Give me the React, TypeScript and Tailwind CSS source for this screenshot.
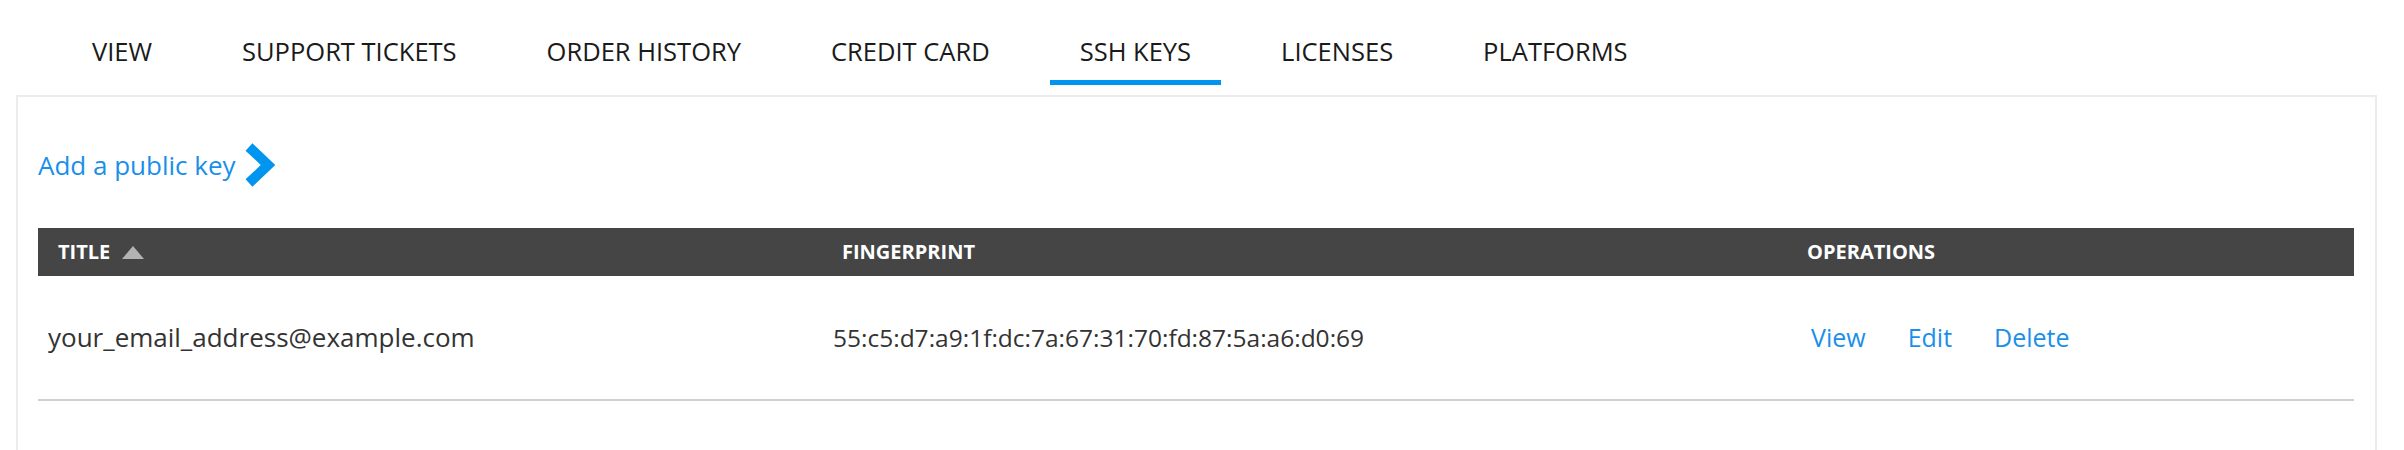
import React from "react";

const tabs = ["View", "Support tickets", "Order history", "Credit card", "SSH keys", "Licenses", "Platforms"];

function Chevron() {
  return (
    <svg width="31" height="44" viewBox="0 0 31 44" className="shrink-0">
      <polyline points="5,4 24,22 5,40" fill="none" stroke="#0096f0" strokeWidth="10" strokeLinejoin="miter" strokeLinecap="butt" />
    </svg>
  );
}

export default function App() {
  return (
    <div className="w-[2404px] h-[450px] overflow-hidden bg-white font-['Open_Sans',sans-serif]">
      <nav className="flex pl-[62px] pt-[34px] mb-[10px]">
        {tabs.map((t) => (
          <div
            key={t}
            className={
              t === "SSH keys"
                ? "px-[30px] mr-[30px] pb-[12px] border-b-[5px] border-[#0096f0] text-[25.5px] leading-[34px] text-[#1a1a1a] uppercase"
                : "px-[30px] mr-[30px] pb-[12px] border-b-[5px] border-transparent text-[25.5px] leading-[34px] text-[#1a1a1a] uppercase"
            }
          >
            {t}
          </div>
        ))}
      </nav>
      <div className="ml-[16px] w-[2361px] h-[400px] border-2 border-[#ececec] px-[20px] pt-[46px]">
        <div className="flex items-center h-[44px]">
          <a className="text-[26px] leading-[34px] text-[#1a8fea]">Add a public key</a>
          <span className="ml-[8px] flex"><Chevron /></span>
        </div>
        <table className="mt-[41px] w-[2316px] table-fixed border-collapse">
          <colgroup>
            <col className="w-[784px]" />
            <col className="w-[965px]" />
            <col />
          </colgroup>
          <thead>
            <tr className="h-[48px] bg-[#454545] text-white text-[20px] font-bold uppercase text-left">
              <th className="pl-[20px] font-bold">
                <span className="inline-flex items-center">
                  Title
                  <svg width="22" height="13" viewBox="0 0 22 13" className="ml-[12px]">
                    <polygon points="11,0 22,13 0,13" fill="#b3b3b3" />
                  </svg>
                </span>
              </th>
              <th className="pl-[20px] font-bold">Fingerprint</th>
              <th className="pl-[20px] font-bold">Operations</th>
            </tr>
          </thead>
          <tbody>
            <tr className="border-b-2 border-[#d0d0d0] leading-[35px] text-[#333]">
              <td className="pl-[10px] py-[44px] text-[26px]">your_email_address@example.com</td>
              <td className="pl-[11px] py-[44px] text-[24.5px]">55:c5:d7:a9:1f:dc:7a:67:31:70:fd:87:5a:a6:d0:69</td>
              <td className="pl-[24px] py-[44px] text-[25px]">
                <div className="flex gap-[42px] text-[#1a8fea]">
                  <a>View</a>
                  <a>Edit</a>
                  <a>Delete</a>
                </div>
              </td>
            </tr>
          </tbody>
        </table>
      </div>
    </div>
  );
}
